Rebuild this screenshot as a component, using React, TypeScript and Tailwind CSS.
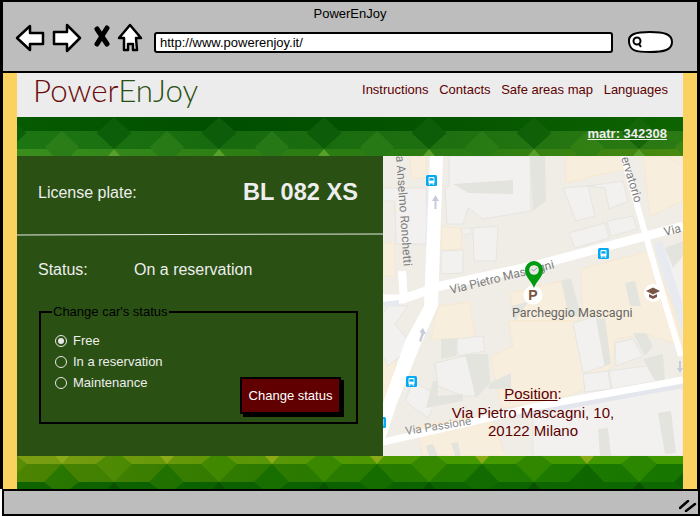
const sans = { fontFamily: '"Liberation Sans", Arial, sans-serif' };

// polygons for the map picture, in map coordinates (300x300)
const peach = [
  "27,0 43,0 43,22 28,22",
  "183,0 237,0 242,13 203,22 183,27",
  "260,0 300,0 300,45 267,60",
  "59,70 78,73 79,93 58,94",
  "0,87 12,87 12,120 0,120",
  "127,137 178,125 196,165 132,165",
  "198,113 267,95 290,150 300,190 262,178 232,183 230,210 198,235 165,247 118,252 108,200 130,190 125,165 200,165",
  "55,150 87,146 92,183 48,183",
  "0,200 14,200 6,247 0,247",
  "33,270 108,258 122,300 40,300",
  "283,0 300,0 300,10",
];
const buildings = [
  "66,0 147,0 148,55 100,63 85,52 80,68 64,68 62,33 66,30",
  "90,72 115,70 113,105 91,105",
  "79,72 88,72 88,78 79,78",
  "58,95 80,94 80,117 58,118",
  "0,32 43,32 45,88 13,88 12,45 0,45",
  "180,32 205,30 212,60 193,65",
  "205,30 240,25 245,45 226,53 222,32",
  "186,77 222,67 226,82 192,92",
  "224,65 250,60 254,73 228,80",
  "190,167 213,160 222,210 200,217",
  "232,187 250,183 260,200 233,210",
  "200,218 225,215 228,233 202,236",
  "226,215 270,209 273,225 229,233",
  "150,250 290,233 300,232 300,300 150,300",
  "52,207 82,200 92,210 92,240 80,240 55,230",
  "73,183 100,180 102,195 75,200",
  "5,150 25,150 12,168 30,190 5,210 0,200 0,158",
  "30,225 55,240 45,262 22,245",
  "277,100 300,92 300,150 292,150",
];
const shadows = [
  "70,28 130,24 130,38 85,37",
  "147,0 162,0 163,45 150,55",
  "178,125 188,122 198,160 186,160",
  "242,127 252,125 258,150 247,150",
  "213,163 222,162 228,208 222,210",
  "250,177 263,177 270,190 262,200",
  "260,203 280,198 282,225 272,225",
  "215,273 225,272 228,300 217,300",
  "275,257 288,255 293,297 282,298",
  "58,183 75,182 73,200 58,203",
  "82,198 105,198 107,227 93,242",
  "50,225 55,225 55,240 80,238 80,245 43,252",
  "107,227 128,217 128,233 105,233",
  "0,145 15,148 12,150 0,150",
  "43,290 50,288 55,300 46,300",
  "68,287 75,286 78,300 72,300",
  "128,150 145,146 132,165",
  "282,92 300,85 300,100 290,112",
];

function BusIcon({ x, y }: { x: number; y: number }) {
  return (
    <g transform={`translate(${x} ${y})`}>
      <rect width="11" height="11" rx="1.5" fill="#03a9f4" />
      <rect x="2.5" y="2" width="6" height="6.5" rx="1" fill="#fff" />
      <rect x="3.4" y="3.2" width="4.2" height="2.4" fill="#03a9f4" />
      <rect x="2.8" y="8.5" width="1.6" height="1.2" fill="#fff" />
      <rect x="6.6" y="8.5" width="1.6" height="1.2" fill="#fff" />
    </g>
  );
}

function MapPicture() {
  const label = "fill-[#7d7d7d] text-[12px]";
  return (
    <svg viewBox="0 0 300 300" className="block h-full w-full" style={{ fontFamily: "Roboto, sans-serif" }}>
      <rect width="300" height="300" fill="#f0ede7" />
      {peach.map((p) => (
        <polygon key={p} points={p} fill="#f8eedd" stroke="#f6e6cd" strokeWidth="0.8" />
      ))}
      {buildings.map((p) => (
        <polygon key={p} points={p} fill="#f2f1ef" stroke="#e6e5e0" strokeWidth="1" />
      ))}
      {shadows.map((p) => (
        <polygon key={p} points={p} fill="#e3e4de" />
      ))}

      {/* lanes beside the roads */}
      <polygon points="45,20 52,20 48,90 42,90" fill="#e8eaf2" />
      <polygon points="271,88 279,85 300,150 300,178" fill="#e8eaf2" />
      <polygon points="130,258 300,226 300,232 135,262" fill="#e4e6ee" />

      {/* roads */}
      <polyline points="240,0 260,70 283,150 298,200" fill="none" stroke="#fff" strokeWidth="6" />
      <polyline points="19,115 21,145" fill="none" stroke="#fff" strokeWidth="8" />
      <polyline points="0,143 20,143 57,130 150,110 263,80 300,70" fill="none" stroke="#fff" strokeWidth="9" />
      <polyline points="0,286 93,265 150,251 300,224" fill="none" stroke="#fff" strokeWidth="7" />
      <polygon points="47,0 60,0 55,150 37,190 13,250 0,290 0,247 23,183 41,150" fill="#fff" />
      <polygon points="0,146 16,144 16,150 0,150" fill="#e8eaf2" />

      {/* one way arrows */}
      <path d="M52.500 39 L56 45 L53.500 45 L53.500 53 L51.500 53 L51.500 45 L49 45 Z" fill="#c7cbdc" />
      <path d="M40 172 L43 178 L41 178 L38 186 L36 185 L38.500 177 L36.500 176 Z" fill="#c7cbdc" />
      <path d="M296 205 L298 205 L298 212 L300 212 L297 217 L294 212 L296 212 Z" fill="#c7cbdc" />

      {/* street names */}
      <text transform="translate(13 0) rotate(86)" className={label}>a Anselmo Ronchetti</text>
      <text transform="translate(238 2) rotate(73)" className={label}>ervatorio</text>
      <text transform="translate(68 138) rotate(-14)" className={label}>Via Pietro Mascagni</text>
      <text transform="translate(282 80) rotate(-14)" className={label}>Via</text>
      <text transform="translate(23 279) rotate(-9)" className="fill-[#8c8c8c] text-[11.5px]">Via Passione</text>
      <text x="129" y="161" className="fill-[#666] text-[12.5px]">Parcheggio Mascagni</text>

      <BusIcon x={43} y={19} />
      <BusIcon x={215} y={92} />
      <BusIcon x={23} y={220} />
      <BusIcon x={-8} y={261} />

      {/* parking and school pins */}
      <circle cx="150" cy="139" r="9.500" fill="#fff" />
      <text x="150" y="144" textAnchor="middle" className="fill-[#795548] text-[14px] font-bold" style={sans}>P</text>
      <circle cx="270" cy="137" r="9" fill="#fff" />
      <path d="M263 135 L270 131.500 L277 135 L270 138.500 Z M266 138 L270 140 L274 138 L274 141 L270 143 L266 141 Z" fill="#795548" />

      {/* car marker */}
      <path d="M151 132 C148 124 142 121 142 114 A9 9 0 0 1 160 114 C160 121 154 124 151 132 Z" fill="#009a10" />
      <circle cx="151" cy="114" r="4.800" fill="#e8e8e4" />
      <path d="M148.500 113 L150.500 115 L154 112" fill="none" stroke="#888" strokeWidth="0.8" />
    </svg>
  );
}

type BannerShape = { points: string; fill: string };
type BannerBand = { y: number; h: number; fill: string };

function Banner({ height, gradients, bands, shapes }: {
  height: number;
  gradients: Record<string, string[]>;
  bands: BannerBand[];
  shapes: (x: number) => BannerShape[];
}) {
  const xs = [-8, 97, 202, 307, 412, 517, 622, 727];
  return (
    <svg viewBox={`0 0 666 ${height}`} className="block w-full shrink-0" style={{ height }}>
      <defs>
        {Object.entries(gradients).map(([id, stops]) => (
          <linearGradient key={id} id={id} gradientUnits="userSpaceOnUse" x1="0" x2="666" y1="0" y2="0">
            {stops.map((c, i) => (
              <stop key={c + i} offset={i / (stops.length - 1)} stopColor={c} />
            ))}
          </linearGradient>
        ))}
      </defs>
      {bands.map((b) => (
        <rect key={b.y} x="0" y={b.y} width="666" height={b.h} fill={b.fill} />
      ))}
      {xs.flatMap((x) => shapes(x)).map((s) => (
        <polygon key={s.points} points={s.points} fill={s.fill} />
      ))}
    </svg>
  );
}

function TopBanner() {
  return (
    <Banner
      height={39}
      gradients={{
        ta: ["#065a00", "#004e00", "#055500", "#0e6400"],
        tb: ["#1c7612", "#176a0e", "#1e7010", "#2c7a14"],
        tc: ["#3a8e1e", "#2c7e14", "#2a7c12", "#4a8a10"],
        td: ["#0d5f08", "#0c5c0a", "#0c5c08", "#176808"],
        te: ["#2b7e18", "#267816", "#267a14", "#3a8414"],
      }}
      bands={[
        { y: 0, h: 14, fill: "url(#ta)" },
        { y: 14, h: 18, fill: "url(#tb)" },
        { y: 32, h: 7, fill: "url(#tc)" },
      ]}
      shapes={(x) => [
        { points: `${x},0 ${x + 17.5},16 ${x},32 ${x - 17.500},16`, fill: "url(#td)" },
        { points: `${x - 52},14 ${x - 35},30 ${x - 43},39 ${x - 61},39 ${x - 69},30`, fill: "url(#te)" },
        { points: `${x},32 ${x + 6},39 ${x - 6},39`, fill: "#58a02a" },
      ]}
    />
  );
}

function BottomBanner() {
  return (
    <Banner
      height={33}
      gradients={{
        ba: ["#7c9e12", "#5c9606", "#459a00", "#3f9800"],
        bb: ["#4d8402", "#2f7a00", "#227c00", "#167600"],
        bc: ["#0f6400", "#0b6000", "#0c6400", "#0e6800"],
        bd: ["#2c7800", "#1a6e00", "#126c00", "#0c6200"],
        be: ["#5a8c08", "#3e8800", "#348800", "#2a8600"],
      }}
      bands={[
        { y: 0, h: 8, fill: "url(#ba)" },
        { y: 8, h: 18, fill: "url(#bb)" },
        { y: 26, h: 7, fill: "url(#bc)" },
      ]}
      shapes={(x) => [
        { points: `${x - 52},8 ${x - 35},26 ${x - 44},33 ${x - 61},33 ${x - 70},26`, fill: "url(#bd)" },
        { points: `${x - 18},8 ${x},26 ${x + 18},8 ${x + 8},0 ${x - 8},0`, fill: "url(#be)" },
        { points: `${x},26 ${x + 6},33 ${x - 6},33`, fill: "#0a5200" },
        { points: `${x - 59},0 ${x - 45},0 ${x - 52},8`, fill: "#8aaa18" },
      ]}
    />
  );
}

function NavIcons() {
  const line = { fill: "#fff", stroke: "#000", strokeWidth: 2.5, strokeLinejoin: "round" as const };
  return (
    <svg width="130" height="30" viewBox="15 22 130 30" className="shrink-0">
      <polygon points="17,37 30,25 30,32 43,32 43,43 30,43 30,49" {...line} />
      <polygon points="80,37 67,24 67,31 54,31 54,43 67,43 67,50" {...line} />
      <path d="M97 28 L107 43 M107 27 L97 43" stroke="#000" strokeWidth="5" strokeLinecap="round" />
      <polygon points="130,24 141,37 136,37 137,49 133,49 133,43 128,43 128,49 124,49 124,37 119,37" {...line} />
    </svg>
  );
}

function SearchBox() {
  return (
    <svg width="50" height="26" viewBox="0 0 50 26" className="shrink-0">
      <path d="M5 13 C4 5 12 3 26 3 C40 3 48 5 48 13 C48 21 40 23 26 23 C12 23 6 22 5 13 Z" fill="#fff" stroke="#000" strokeWidth="2" />
      <circle cx="13" cy="12" r="3.500" fill="none" stroke="#000" strokeWidth="2" />
      <path d="M15 15 L17 18" stroke="#000" strokeWidth="2" />
    </svg>
  );
}

function Radio({ label, checked }: { label: string; checked?: boolean }) {
  return (
    <label className="flex h-[21px] items-center gap-[6px] text-[13px] text-[#eeeeee]">
      <span className="flex h-3 w-3 items-center justify-center rounded-full border border-[#e8e8e8]">
        {checked && <span className="h-[6px] w-[6px] rounded-full bg-[#e8e8e8]" />}
      </span>
      {label}
    </label>
  );
}

export default function App() {
  return (
    <div className="flex h-[517px] w-[700px] flex-col overflow-hidden bg-white" style={sans}>
      {/* browser chrome */}
      <div className="h-[73px] shrink-0 border-x-[3px] border-t-[2px] border-b-[2px] border-black bg-[#bdbdbd]">
        <div className="pt-[4px] text-center text-[13px] leading-[16px] text-black">PowerEnJoy</div>
        <div className="flex items-start pl-[12px] pt-[1px]">
          <NavIcons />
          <div className="ml-[9px] mt-[9px] flex h-[21px] w-[459px] items-center rounded-[3px] border-2 border-black bg-white pl-[4px] text-[13px] text-black">
            http://www.powerenjoy.it/
          </div>
          <div className="ml-[11px] mt-[6px]">
            <SearchBox />
          </div>
        </div>
      </div>

      {/* page */}
      <div className="flex h-[416px] shrink-0 flex-col border-x-[3px] border-black bg-[#fbd25f] px-[14px]">
        <header className="flex h-[44px] shrink-0 items-start justify-between bg-[#ececec] pl-[16px] pr-[15px]">
          <div className="text-[31.300px] font-light leading-[34px]" style={{ fontFamily: "Lato, sans-serif" }}>
            <span className="text-[#6a0a0a]">Power</span>
            <span className="text-[#2a5014]">EnJoy</span>
          </div>
          <nav className="flex gap-[10.700px] pt-[9px] text-[13px] leading-[16px] text-[#5c0000]">
            <span>Instructions</span>
            <span>Contacts</span>
            <span>Safe areas map</span>
            <span>Languages</span>
          </nav>
        </header>

        <div className="relative shrink-0">
          <TopBanner />
          <a className="absolute right-[16px] top-[9px] text-[13px] font-bold leading-[16px] text-[#eeeeee] underline">matr: 342308</a>
        </div>

        <main className="flex h-[300px] shrink-0">
          <section className="flex w-[366px] shrink-0 flex-col bg-[#2a5014] text-[#eeeeee]">
            <div className="flex h-[78px] shrink-0 items-center justify-between pb-[4px] pl-[21px] pr-[25px]">
              <span className="text-[16px]">License plate:</span>
              <span className="text-[23.600px] font-bold">BL 082 XS</span>
            </div>
            <div className="h-px shrink-0 -rotate-[0.15deg] bg-[#e4e8e0]" />
            <div className="flex h-[70px] shrink-0 items-center pl-[21px] text-[16px]">
              <span className="w-[96px]">Status:</span>
              <span>On a reservation</span>
            </div>
            <fieldset className="ml-[22px] mr-[25px] h-[119px] border-2 border-black pl-[14px] pr-[15px]">
              <legend className="-ml-[3px] px-px text-[13px] leading-[14px] text-black">Change car's status</legend>
              <div className="flex items-start justify-between">
                <div className="flex flex-col pt-[11px]">
                  <Radio label="Free" checked />
                  <Radio label="In a reservation" />
                  <Radio label="Maintenance" />
                </div>
                <button className="mt-[58px] h-[37px] w-[101px] border-2 border-black bg-[#600000] text-[13px] text-white shadow-[3px_3px_0_#000]">
                  Change status
                </button>
              </div>
            </fieldset>
          </section>

          <section className="relative min-w-0 flex-1">
            <MapPicture />
            <div className="absolute left-0 right-0 top-[229px] text-center text-[15px] leading-[18.500px] text-[#5c0000]">
              <span className="underline">Position</span>:
              <br />
              Via Pietro Mascagni, 10,
              <br />
              20122 Milano
            </div>
          </section>
        </main>

        <BottomBanner />
      </div>

      {/* status bar */}
      <div className="relative ml-[2px] h-[27px] shrink-0 border-2 border-black bg-[#bdbdbd]">
        <svg width="18" height="12" viewBox="0 0 18 12" className="absolute bottom-[2px] right-[1px]">
          <path d="M1 8 L9 1 M7 11 L16 4" stroke="#000" strokeWidth="2.500" strokeLinecap="round" />
        </svg>
      </div>
    </div>
  );
}
